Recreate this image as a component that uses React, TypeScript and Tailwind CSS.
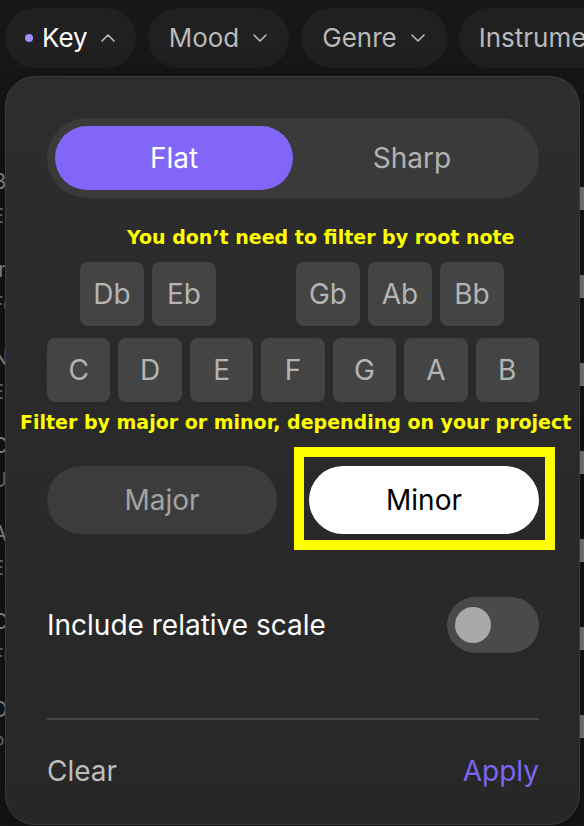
import React from 'react';

const FONT = { fontFamily: 'Inter, "Noto Sans", sans-serif' };
const NOTE_FONT = { fontFamily: '"DejaVu Sans", Verdana, sans-serif' };

function Chevron({ up = false }: { up?: boolean }) {
  return (
    <svg width="14" height="8" viewBox="0 0 14 8" fill="none" stroke="currentColor" strokeWidth="1.6" strokeLinecap="round" strokeLinejoin="round">
      <path d={up ? 'M1 7l6-6 6 6' : 'M1 1l6 6 6-6'} />
    </svg>
  );
}

function KeyButton({ label }: { label: string }) {
  return (
    <div className="flex h-[64px] w-[64px] shrink-0 items-center justify-center rounded-[8px] bg-[#444444] text-[28px] text-[#b4b4b4]">
      {label}
    </div>
  );
}

const ROWS = [
  ['Bossa', 'Electric'],
  ['Indie', 'Fender'],
  ['Night', 'Electro'],
  ['Cosmic', 'Upbeat'],
  ['Ambient', 'Electro'],
  ['Cloud', 'Funk'],
  ['Dusk', 'Piano'],
];

export default function App() {
  return (
    <div className="relative h-[826px] w-[584px] overflow-hidden bg-[#171717]" style={FONT}>
      {/* Filter pills */}
      <div className="flex h-[76px] gap-[12px] pl-[5px] pt-[8px]">
        <div className="flex h-[60px] shrink-0 items-center rounded-full bg-[#202020] pl-[20px] pr-[21px] text-white">
          <span className="h-[8px] w-[8px] rounded-full bg-[#a58bff]" />
          <span className="ml-[9px] text-[26px] leading-none">Key</span>
          <span className="ml-[13px] text-[#bdbdbd]">
            <Chevron up />
          </span>
        </div>
        {['Mood', 'Genre'].map((p) => (
          <div key={p} className="flex h-[60px] shrink-0 items-center rounded-full bg-[#202020] pl-[21px] pr-[22px] text-[#b9b9b9]">
            <span className="text-[26px] leading-none">{p}</span>
            <span className="ml-[14px]">
              <Chevron />
            </span>
          </div>
        ))}
        <div className="flex h-[60px] shrink-0 items-center rounded-full bg-[#202020] pl-[20px] pr-[22px] text-[#b9b9b9]">
          <span className="text-[26px] leading-none">Instruments</span>
        </div>
      </div>

      {/* List behind the dropdown */}
      <div className="flex flex-col pt-[78px]">
        {ROWS.map(([t, s], i) => (
          <div key={i} className="relative flex h-[88px] items-center justify-between">
            <div className="-ml-[8px] flex flex-col gap-[14px]">
              <span className="text-[22px] leading-none text-[#9a9a9a]">{t}</span>
              <span className="text-[20px] leading-none text-[#777777]">{s}</span>
            </div>
            <div className="h-[23px] w-[4px] bg-[#8a8a8a]" />
          </div>
        ))}
      </div>

      {/* Key dropdown */}
      <div className="absolute left-[5px] top-[76px] flex h-[749px] w-[575px] flex-col rounded-[30px] border border-[#3b3b3b] bg-gradient-to-b from-[#2d2d2d] to-[#272727] pl-[41px] pr-[40px] pt-[41px] shadow-[0_8px_30px_rgba(0,0,0,0.5)]">
        {/* Flat / Sharp */}
        <div className="flex h-[80px] rounded-full bg-[#3a3a3a] p-[8px]">
          <div className="flex flex-1 items-center justify-center rounded-full bg-[#8266fa] text-[28px] text-white">
            Flat
          </div>
          <div className="flex flex-1 items-center justify-center text-[28px] text-[#b2b2b2]">
            Sharp
          </div>
        </div>

        <div className="h-[64px] pl-[80px] pt-[29px]">
          <p className="whitespace-nowrap text-[19px] font-bold leading-[20px] text-[#ffff00]" style={NOTE_FONT}>
            You don’t need to filter by root note
          </p>
        </div>

        {/* Notes */}
        <div className="flex gap-[8px] pl-[33px]">
          <KeyButton label="Db" />
          <KeyButton label="Eb" />
          <div className="w-[64px] shrink-0" />
          <KeyButton label="Gb" />
          <KeyButton label="Ab" />
          <KeyButton label="Bb" />
        </div>
        <div className="mt-[12px] grid grid-cols-7 gap-[8px]">
          {['C', 'D', 'E', 'F', 'G', 'A', 'B'].map((n) => (
            <div key={n} className="flex h-[64px] items-center justify-center rounded-[8px] bg-[#444444] text-[28px] text-[#b4b4b4]">
              {n}
            </div>
          ))}
        </div>

        <div className="-ml-[27px] h-[64px] pt-[10px]">
          <p className="whitespace-nowrap text-[19px] font-bold leading-[20px] text-[#ffff00]" style={NOTE_FONT}>
            Filter by major or minor, depending on your project
          </p>
        </div>

        {/* Major / Minor */}
        <div className="relative flex h-[68px] gap-[32px]">
          <div className="flex flex-1 items-center justify-center rounded-full bg-[#3c3c3c] text-[28px] text-[#a3a3a3]">
            Major
          </div>
          <div className="flex flex-1 items-center justify-center rounded-full bg-white text-[28px] text-black">
            Minor
          </div>
          <div className="absolute left-[247px] top-[-19px] h-[103px] w-[261px] border-[10px] border-[#ffff00]" />
        </div>

        {/* Relative scale */}
        <div className="mt-[63px] flex h-[56px] items-center justify-between">
          <span className="text-[28px] text-white">Include relative scale</span>
          <div className="flex h-[56px] w-[92px] items-center rounded-full bg-[#4a4a4a] pl-[8px]">
            <div className="h-[36px] w-[36px] rounded-full bg-[#a9a9a9]" />
          </div>
        </div>

        <div className="mt-[65px] h-[2px] bg-[#444444]" />

        <div className="mt-[35px] flex items-center justify-between text-[28px] leading-[32px]">
          <span className="text-[#bdbdbd]">Clear</span>
          <span className="text-[#7c66f2]">Apply</span>
        </div>
      </div>
    </div>
  );
}
